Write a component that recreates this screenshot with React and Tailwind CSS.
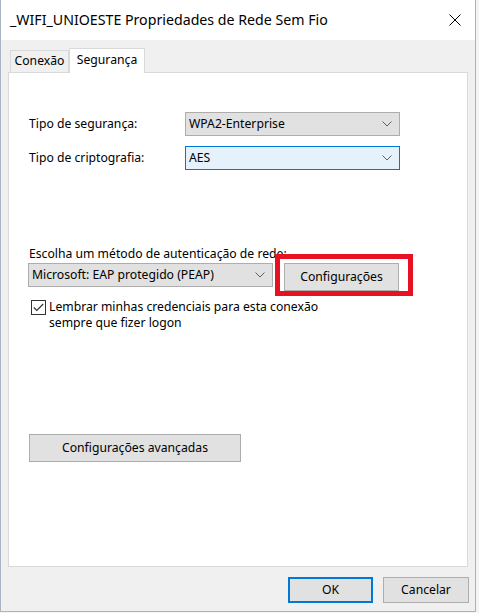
import React from 'react';

const font = { fontFamily: '"Noto Sans", "Open Sans", sans-serif' };

const Chevron = () => (
    <svg width="10" height="6" viewBox="0 0 10 6" className="shrink-0">
        <polyline points="0.5,0.5 5,5 9.5,0.5" fill="none" stroke="#606060" strokeWidth="1" />
    </svg>
);

const Select = ({ value, active, className }) => (
    <div
        className={`flex items-center justify-between h-[24px] pl-[3px] pr-[7px] text-[12.2px] text-black border ${
            active ? 'bg-[#e5f1fb] border-[#0078d7]' : 'bg-[#e1e1e1] border-[#adadad]'
        } ${className}`}
    >
        <span>{value}</span>
        <Chevron />
    </div>
);

const Button = ({ children, className }) => (
    <div
        className={`flex items-center justify-center bg-[#e1e1e1] border border-[#adadad] text-[12.2px] text-black ${className}`}
    >
        {children}
    </div>
);

const App = () => {
    return (
        <div className="w-[479px] h-[613px] bg-[#f4f4f4] overflow-hidden" style={font}>
            <div className="w-[476px] h-[612px] flex flex-col bg-[#f0f0f0] border-r border-b border-l border-[#a9b4c2]">
                {/* title bar */}
                <div className="h-[40px] bg-white flex items-center justify-between pl-[9px] pr-[14px] shrink-0">
                    <span className="text-[14.2px] text-black leading-none pt-[1px]">
                        _WIFI_UNIOESTE Propriedades de Rede Sem Fio
                    </span>
                    <svg width="12" height="12" viewBox="0 0 12 12">
                        <path d="M0.5 0.5 L11.5 11.5 M11.5 0.5 L0.5 11.5" stroke="#000" strokeWidth="1" />
                    </svg>
                </div>

                {/* tabs */}
                <div className="flex items-end h-[32px] pl-[9px] pt-[8px] shrink-0">
                    <div className="h-[22px] w-[59px] flex items-center justify-center text-[12.2px] text-black bg-[#f0f0f0] border border-b-0 border-[#d9d9d9]">
                        Conexão
                    </div>
                    <div className="relative h-[25px] w-[76px] -mb-[1px] z-10 flex items-center justify-center text-[12.2px] text-black bg-white border border-b-0 border-[#d9d9d9] pb-[2px]">
                        Segurança
                    </div>
                </div>

                {/* panel */}
                <div className="ml-[7px] w-[460px] h-[495px] bg-white border border-[#d9d9d9] shrink-0 pl-[20px] pt-[39px] flex flex-col">
                    <div className="flex items-center h-[24px]">
                        <span className="w-[156px] text-[12.2px] text-black">Tipo de segurança:</span>
                        <Select value="WPA2-Enterprise" className="w-[215px]" />
                    </div>
                    <div className="flex items-center h-[24px] mt-[10px]">
                        <span className="w-[156px] text-[12.2px] text-black">Tipo de criptografia:</span>
                        <Select value="AES" active className="w-[215px]" />
                    </div>

                    <div className="mt-[75px] h-[17px] text-[12.2px] text-black leading-[17px]">
                        Escolha um método de autenticação de rede:
                    </div>
                    <div className="flex items-start mt-[1px] h-[28px] -ml-[1px]">
                        <Select value="Microsoft: EAP protegido (PEAP)" className="w-[245px]" />
                        <div className="relative ml-[11px]">
                            <Button className="w-[115px] h-[28px]">Configurações</Button>
                            <div className="absolute -left-[9px] -top-[9px] w-[138px] h-[42px] border-[5px] border-[#e81123] pointer-events-none" />
                        </div>
                    </div>

                    <div className="flex items-start mt-[9px] ml-[2px]">
                        <div className="w-[15px] h-[15px] border border-[#333] flex items-center justify-center shrink-0">
                            <svg width="11" height="9" viewBox="0 0 11 9">
                                <polyline points="0.8,4.5 3.8,7.5 10.2,1" fill="none" stroke="#333" strokeWidth="1.2" />
                            </svg>
                        </div>
                        <div className="ml-[3px] -mt-[1px] text-[12.2px] text-black leading-[16px]">
                            Lembrar minhas credenciais para esta conexão
                            <br />
                            sempre que fizer logon
                        </div>
                    </div>

                    <Button className="mt-[103px] w-[212px] h-[28px]">Configurações avançadas</Button>
                </div>

                {/* footer */}
                <div className="flex justify-end gap-[10px] pr-[6px] mt-[10px]">
                    <div className="w-[85px] h-[26px] flex items-center justify-center bg-[#e1e1e1] border-2 border-[#0078d7] text-[12.2px] text-black">
                        OK
                    </div>
                    <Button className="w-[86px] h-[26px]">Cancelar</Button>
                </div>
            </div>
        </div>
    );
};

export default App;
